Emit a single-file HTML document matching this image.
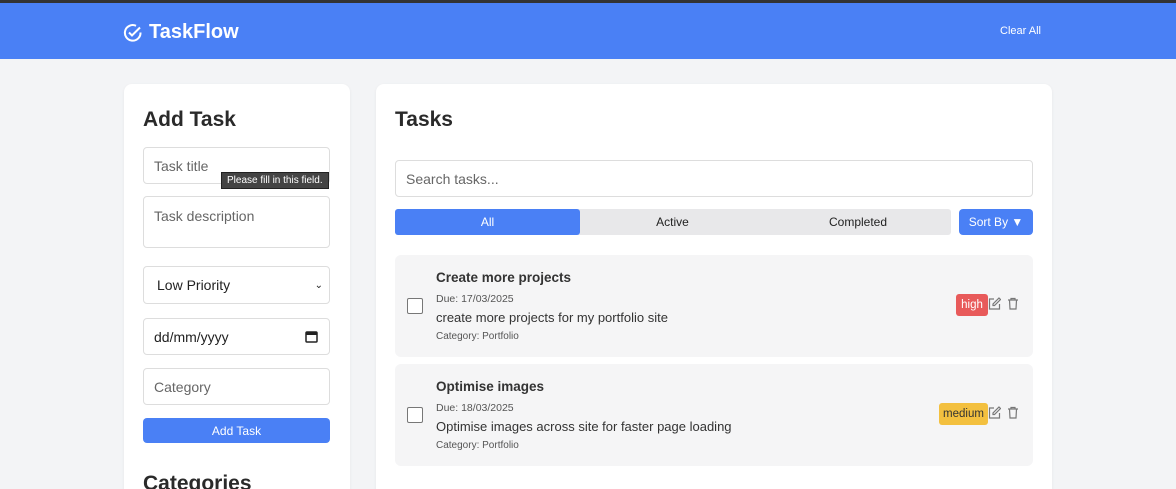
<!DOCTYPE html>
<html><head><style>
*{box-sizing:border-box;margin:0;padding:0}
html,body{width:1176px;height:489px;overflow:hidden}
body{background:#f3f4f6;font-family:"Liberation Sans",sans-serif;color:#222;position:relative}
.top{position:absolute;left:0;top:0;width:1176px;height:3px;background:#333}
.hdr{position:absolute;left:0;top:3px;width:1176px;height:56px;background:#4a80f5;color:#fff}
.logo{position:absolute;left:123px;top:18px;font-size:20px;font-weight:bold;display:flex;align-items:center;gap:6px}
.clear{position:absolute;left:1000px;top:22px;font-size:11px}
.card{position:absolute;background:#fff;border-radius:8px;box-shadow:0 1px 3px rgba(0,0,0,.06)}
h2{font-size:21px;font-weight:bold;color:#2a2a2a;position:absolute}
.in{position:absolute;border:1px solid #ddd;border-radius:4px;background:#fff;font-size:14px;color:#666;padding-left:10px;display:flex;align-items:center}
.btn{position:absolute;background:#4a80f5;color:#fff;border-radius:4px;font-size:12px;display:flex;align-items:center;justify-content:center}
.task{position:absolute;left:395px;width:638px;background:#f5f5f6;border-radius:6px;height:102px}
.cb{position:absolute;left:12px;top:43px;width:16px;height:16px;border:1.5px solid #777;border-radius:2px;background:#fff}
.tt{position:absolute;left:41px;top:15px;font-size:13.5px;font-weight:bold;color:#333}
.due{position:absolute;left:41px;top:38px;font-size:10.5px;color:#555}
.desc{position:absolute;left:41px;top:55px;font-size:13px;color:#333}
.cat{position:absolute;left:41px;top:76px;font-size:10px;color:#555}
.badge{position:absolute;top:39px;height:22px;border-radius:3px;font-size:11.5px;display:flex;align-items:center;justify-content:center}
.ic{position:absolute;top:42px}
</style></head><body>
<div class="top"></div>
<div class="hdr">
<div class="logo"><svg width="20" height="20" viewBox="0 0 20 20" fill="none" stroke="#fff" stroke-width="2"><path d="M17.5 9.5A7.8 7.8 0 1 1 13 2.8"/><path d="M6 9.5l3 3 8-8"/></svg>TaskFlow</div>
<div class="clear">Clear All</div>
</div>
<div class="card" style="left:124px;top:84px;width:226px;height:420px">
<h2 style="left:19px;top:24px">Add Task</h2>
<h2 style="left:19px;top:388px">Categories</h2>
</div>
<div class="in" style="left:143px;top:147px;width:187px;height:37px">Task title</div>
<div style="position:absolute;left:221px;top:172px;background:#444;color:#fff;font-size:10px;padding:2px 5px;border:1px solid #222">Please fill in this field.</div>
<div class="in" style="left:143px;top:196px;width:187px;height:52px;align-items:flex-start;padding-top:11px">Task description</div>
<div class="in" style="left:143px;top:266px;width:187px;height:38px;color:#222;padding-left:13px">Low Priority<span style="position:absolute;right:6px;font-size:10px">⌄</span></div>
<div class="in" style="left:143px;top:318px;width:187px;height:37px;color:#222">dd/mm/yyyy<svg style="position:absolute;right:11px" width="13" height="13" viewBox="0 0 13 13"><rect x="1" y="2" width="11" height="10" rx="1" fill="none" stroke="#222" stroke-width="1.5"/><rect x="1" y="2" width="11" height="3" fill="#222"/></svg></div>
<div class="in" style="left:143px;top:368px;width:187px;height:37px">Category</div>
<div class="btn" style="left:143px;top:418px;width:187px;height:25px">Add Task</div>

<div class="card" style="left:376px;top:84px;width:676px;height:420px">
<h2 style="left:19px;top:24px">Tasks</h2>
</div>
<div class="in" style="left:395px;top:160px;width:638px;height:37px">Search tasks...</div>
<div style="position:absolute;left:395px;top:209px;width:556px;height:26px;background:#e8e8ea;border-radius:3px;font-size:12px">
<div style="position:absolute;left:0;width:185px;height:26px;background:#4a80f5;color:#fff;border-radius:3px;display:flex;align-items:center;justify-content:center">All</div>
<div style="position:absolute;left:185px;width:185px;height:26px;display:flex;align-items:center;justify-content:center">Active</div>
<div style="position:absolute;left:370px;width:186px;height:26px;display:flex;align-items:center;justify-content:center">Completed</div>
</div>
<div class="btn" style="left:959px;top:209px;width:74px;height:26px">Sort By ▼</div>

<div class="task" style="top:255px"><div class="cb"></div><div class="tt">Create more projects</div><div class="due">Due: 17/03/2025</div><div class="desc">create more projects for my portfolio site</div><div class="cat">Category: Portfolio</div>
<div class="badge" style="left:561px;width:32px;background:#e85a5a;color:#fff">high</div>
<svg class="ic" style="left:593px" width="13" height="13" viewBox="0 0 13 13" fill="none" stroke="#777" stroke-width="1.2"><path d="M6 2H1.5v10h10V7"/><path d="M11 1l1.5 1.5-6 6H5V7z"/></svg>
<svg class="ic" style="left:612px" width="12" height="13" viewBox="0 0 12 13" fill="none" stroke="#777" stroke-width="1.2"><path d="M1 3h10M4 3V1.5h4V3M2.5 3l.5 9h6l.5-9"/></svg></div>
<div class="task" style="top:364px"><div class="cb"></div><div class="tt">Optimise images</div><div class="due">Due: 18/03/2025</div><div class="desc">Optimise images across site for faster page loading</div><div class="cat">Category: Portfolio</div>
<div class="badge" style="left:544px;width:49px;background:#f3c03f;color:#333">medium</div>
<svg class="ic" style="left:593px" width="13" height="13" viewBox="0 0 13 13" fill="none" stroke="#777" stroke-width="1.2"><path d="M6 2H1.5v10h10V7"/><path d="M11 1l1.5 1.5-6 6H5V7z"/></svg>
<svg class="ic" style="left:612px" width="12" height="13" viewBox="0 0 12 13" fill="none" stroke="#777" stroke-width="1.2"><path d="M1 3h10M4 3V1.5h4V3M2.5 3l.5 9h6l.5-9"/></svg></div>
</body></html>
